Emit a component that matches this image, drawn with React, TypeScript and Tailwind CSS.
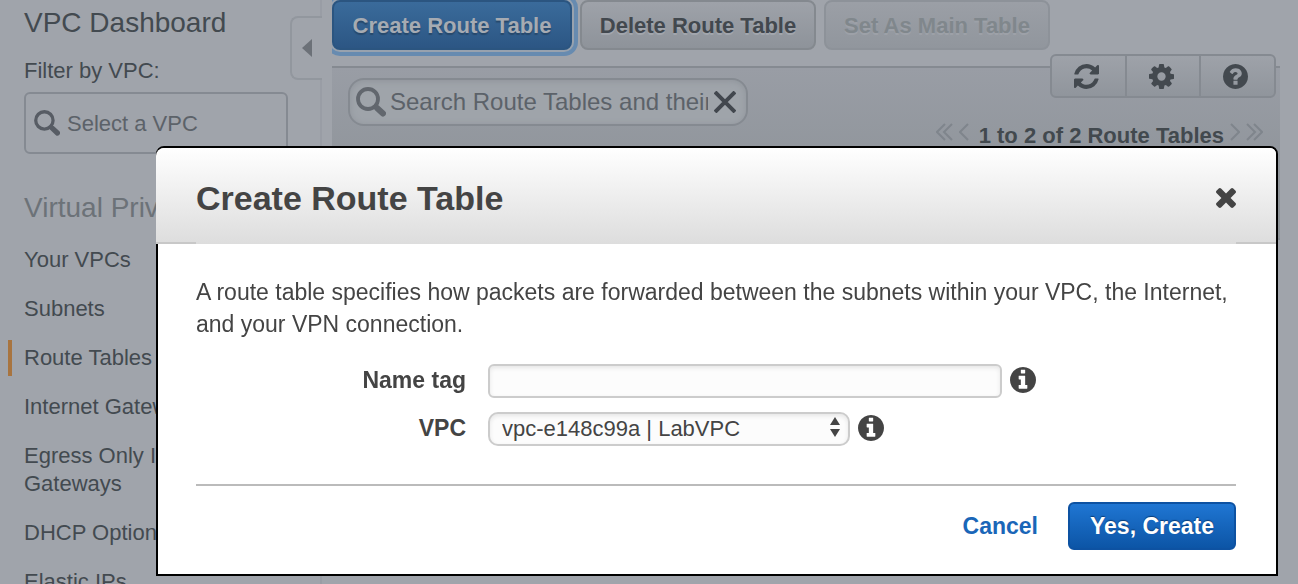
import React from "react";

const CIRCLE =
  "m640 416q0 209-103 385.5t-279.5 279.5-385.5 103-385.5-103-279.5-279.5-103-385.5 103-385.5 279.5-279.5 385.5-103 385.5 103 279.5 279.5 103 385.5z";

function InfoIcon() {
  return (
    <svg viewBox="128 128 1536 1536" className="mb-0.5 size-[26px] fill-[#444]" aria-hidden="true">
      <path
        d={
          "M1152 1376v-160q0-14-9-23t-23-9h-96v-512q0-14-9-23t-23-9h-320q-14 0-23 9t-9 23v160q0 14 9 23t23 9h96v320h-96q-14 0-23 9t-9 23v160q0 14 9 23t23 9h448q14 0 23-9t9-23zm-128-896v-160q0-14-9-23t-23-9h-192q-14 0-23 9t-9 23v160q0 14 9 23t23 9h192q14 0 23-9t9-23z" +
          CIRCLE
        }
      />
    </svg>
  );
}

function QuestionIcon() {
  return (
    <svg viewBox="128 128 1536 1536" className="size-[25px] fill-[#43494f]" aria-hidden="true">
      <path d="M1024 1376v-192q0-14-9-23t-23-9h-192q-14 0-23 9t-9 23v192q0 14 9 23t23 9h192q14 0 23-9t9-23zm256-672q0-88-55.5-163t-138.5-116-170-41q-243 0-371 213-15 24 8 42l132 100q7 6 19 6 16 0 25-12 53-68 86-92 34-24 86-24 48 0 85.5 26t37.5 59q0 38-20 61t-68 45q-63 28-115.5 86.5t-52.5 125.5v36q0 14 9 23t23 9h192q14 0 23-9t9-23q0-19 21.5-49.5t54.5-49.5q32-18 49-28.5t46-35 44.5-48 28-60.5 12.5-81zm384 192q0 209-103 385.5t-279.5 279.5-385.5 103-385.5-103-279.5-279.5-103-385.5 103-385.5 279.5-279.5 385.5-103 385.5 103 279.5 279.5 103 385.5z" />
    </svg>
  );
}

function RefreshIcon() {
  return (
    <svg viewBox="128 128 1536 1536" className="size-[25px] fill-[#43494f]" aria-hidden="true">
      <path d="M1639 1056q0 5-1 7-64 268-268 434.5t-478 166.5q-146 0-282.5-55t-243.5-157l-129 129q-19 19-45 19t-45-19-19-45v-448q0-26 19-45t45-19h448q26 0 45 19t19 45-19 45l-137 137q71 66 161 102t187 36q134 0 250-65t186-179q11-17 53-117 8-23 30-23h192q13 0 22.5 9.5t9.5 22.5zm25-800v448q0 26-19 45t-45 19h-448q-26 0-45-19t-19-45 19-45l138-138q-148-137-349-137-134 0-250 65t-186 179q-11 17-53 117-8 23-30 23h-199q-13 0-22.5-9.5t-9.5-22.5v-7q65-268 270-434.5t480-166.5q146 0 284 55.5t245 156.5l130-129q19-19 45-19t45 19 19 45z" />
    </svg>
  );
}

function GearIcon() {
  return (
    <svg viewBox="128 128 1536 1536" className="size-[25px] fill-[#43494f]" aria-hidden="true">
      <path d="M1152 896q0-106-75-181t-181-75-181 75-75 181 75 181 181 75 181-75 75-181zm512-109v222q0 12-8 23t-20 13l-185 28q-19 54-39 91 35 50 107 138 10 12 10 25t-9 23q-27 37-99 108t-94 71q-12 0-26-9l-138-108q-44 23-91 38-16 136-29 186-7 28-36 28h-222q-14 0-24.5-8.5t-11.5-21.5l-28-184q-49-16-90-37l-141 107q-10 9-25 9-14 0-25-11-126-114-165-168-7-10-7-23 0-12 8-23 15-21 51-66.5t54-70.5q-27-50-41-99l-183-27q-13-2-21-12.5t-8-23.5v-222q0-12 8-23t19-13l186-28q14-46 39-92-40-57-107-138-10-12-10-24 0-10 9-23 26-36 98.5-107.5t94.5-71.5q13 0 26 10l138 107q44-23 91-38 16-136 29-186 7-28 36-28h222q14 0 24.5 8.5t11.5 21.5l28 184q49 16 90 37l142-107q9-9 24-9 13 0 25 10 129 119 165 170 7 8 7 22 0 12-8 23-15 21-51 66.5t-54 70.5q26 50 41 98l183 28q13 2 21 12.5t8 23.5z" />
    </svg>
  );
}

function CloseIcon() {
  return (
    <svg viewBox="302 366 1188 1188" className="size-5 fill-[#444]" aria-hidden="true">
      <path d="M1490 1322q0 40-28 68l-136 136q-28 28-68 28t-68-28l-294-294-294 294q-28 28-68 28t-68-28l-136-136q-28-28-28-68t28-68l294-294-294-294q-28-28-28-68t28-68l136-136q28-28 68-28t68 28l294 294 294-294q28-28 68-28t68 28l136 136q28 28 28 68t-28 68l-294 294 294 294q28 28 28 68z" />
    </svg>
  );
}

function SearchIcon({ className }: { className: string }) {
  return (
    <svg viewBox="0 0 30 30" className={className} fill="none" aria-hidden="true">
      <circle cx="12" cy="12" r="10" stroke="currentColor" strokeWidth="3.8" />
      <path d="M18 18l3 3" stroke="currentColor" strokeWidth="4.5" />
      <path d="M21 21l6 5.500" stroke="currentColor" strokeWidth="6" strokeLinecap="round" />
    </svg>
  );
}

function Chevron({ d, width, label }: { d: string; width: number; label: string }) {
  return (
    <button type="button" aria-label={label} className="text-[#7f858c]">
      <svg width={width} height="18" viewBox={`0 0 ${width} 18`} fill="none" stroke="currentColor" strokeWidth="2">
        <path d={d} />
      </svg>
    </button>
  );
}

const links = [
  "Your VPCs",
  "Subnets",
  "Route Tables",
  "Internet Gateways",
  "Egress Only Internet Gateways",
  "DHCP Options Sets",
  "Elastic IPs",
];

function Sidebar() {
  return (
    <aside className="flex w-[322px] shrink-0 flex-col border-r-2 border-[#999da5] pl-6">
      <div className="flex items-start justify-between">
        <h1 className="mt-[5px] text-[28px] leading-9 text-[#434a50]">VPC Dashboard</h1>
        <button
          type="button"
          aria-label="Collapse sidebar"
          className="-mr-0.5 mt-4 -mb-10 flex h-16 w-8 items-center justify-center rounded-l-lg border-2 border-r-0 border-[#92979e] bg-[#a0a4ab]"
        >
          <svg viewBox="0 0 10 18" className="h-[18px] w-[10px] fill-[#6c7178]" aria-hidden="true">
            <path d="M10 0v18L0 9z" />
          </svg>
        </button>
      </div>
      <label htmlFor="vpc-filter" className="mt-4 text-[22px] leading-7 text-[#434a50]">
        Filter by VPC:
      </label>
      <div className="mr-8 mt-[7px] flex h-[62px] shrink-0 items-center gap-[7px] rounded-md border-2 border-[#858a92] pl-2">
        <SearchIcon className="size-[26px] shrink-0 text-[#575c64]" />
        <input
          id="vpc-filter"
          placeholder="Select a VPC"
          className="w-full min-w-0 bg-transparent text-[22px] text-[#5c6269] outline-none placeholder:text-[#5c6269]"
        />
      </div>
      <h2 className="mt-9 shrink-0 whitespace-nowrap text-[28px] leading-9 text-[#6c7278]">Virtual Private Cloud</h2>
      <nav className="mt-5 flex flex-col gap-[21px] text-[22px] leading-7 text-[#434a50]">
        {links.map((l) => (
          <a
            key={l}
            href="#"
            aria-current={l === "Route Tables" ? "page" : undefined}
            className={
              l === "Route Tables"
                ? "-my-1 -ml-4 border-l-4 border-[#a8743f] py-1 pl-3"
                : "pr-12"
            }
          >
            {l}
          </a>
        ))}
      </nav>
    </aside>
  );
}

const iconButton = "flex flex-1 items-center justify-center pr-1";

function Content() {
  return (
    <main className="min-w-0 flex-1 overflow-hidden pr-[18px] text-[22px]">
      <div className="flex gap-2 font-bold">
        <button
          type="button"
          className="h-[50px] w-60 rounded-lg border-2 border-[#2b5580] bg-linear-to-b from-[#3a6b9b] to-[#2c5684] text-[#a6abb2] shadow-[0_0_0_2px_#98a2ae,0_0_0_6px_#678bb0] [text-shadow:0_2px_1px_#27496c]"
        >
          Create Route Table
        </button>
        <button
          type="button"
          className="h-[50px] w-[236px] rounded-lg border-2 border-[#84898f] bg-linear-to-b from-[#9ea2a9] to-[#8e939a] text-[#42484e] [text-shadow:0_2px_0_#a2a6ad]"
        >
          Delete Route Table
        </button>
        <button
          type="button"
          disabled
          className="h-[50px] w-[226px] rounded-lg border-2 border-[#8d9299] bg-linear-to-b from-[#9b9fa6] to-[#91969d] text-[#80878c] [text-shadow:0_2px_0_#9da1a8]"
        >
          Set As Main Table
        </button>
      </div>
      <div className="mt-4 flex h-[174px] items-start justify-between border-y-2 border-[#858a91] bg-linear-to-b from-[#999da5] to-[#8a9095] pl-4 pr-1">
        <div className="mt-2.5 flex h-12 w-[400px] items-center rounded-2xl border-2 border-[#858a91] bg-[#9fa4aa] pl-1.5 pr-2.5 shadow-[inset_0_1px_6px_#8f949b]">
          <SearchIcon className="size-[30px] shrink-0 text-[#62676e]" />
          <input
            aria-label="Search Route Tables"
            placeholder="Search Route Tables and their attributes"
            className="ml-1 mr-1.5 w-full min-w-0 bg-transparent text-2xl text-[#5c6269] outline-none placeholder:text-[#5c6269]"
          />
          <button type="button" aria-label="Clear search">
            <svg viewBox="0 0 22 22" className="size-[22px] stroke-[#42474e]" strokeWidth="4" fill="none">
              <path d="M1 1l20 20M21 1L1 21" />
            </svg>
          </button>
        </div>
        <div className="-mt-3.5 flex flex-col items-end">
          <div className="flex h-11 w-[226px] divide-x-2 divide-[#858a91] rounded-md border-2 border-[#858a91] bg-linear-to-b from-[#9ea2a9] to-[#90959c]">
            <button type="button" aria-label="Refresh" className={iconButton}>
              <RefreshIcon />
            </button>
            <button type="button" aria-label="Settings" className={iconButton}>
              <GearIcon />
            </button>
            <button type="button" aria-label="Help" className={iconButton}>
              <QuestionIcon />
            </button>
          </div>
          <div className="mr-[13px] mt-3.5 flex items-center gap-1.5">
            <Chevron label="First page" width={17} d="M9 1L1 9l8 8M16 1L8 9l8 8" />
            <Chevron label="Previous page" width={10} d="M9 1L1 9l8 8" />
            <p className="pl-1 pt-2 font-bold leading-8 text-[#42494e]">1 to 2 of 2 Route Tables</p>
            <Chevron label="Next page" width={10} d="M1 1l8 8-8 8" />
            <Chevron label="Last page" width={17} d="M1 1l8 8-8 8M8 1l8 8-8 8" />
          </div>
        </div>
      </div>
    </main>
  );
}

function Dialog() {
  const label = "w-[270px] shrink-0 pb-0.5 text-right text-[23px] leading-8 font-bold";
  const field =
    "h-[34px] border-2 border-[#ccc] bg-[#fcfcfc] text-[22px] text-[#444] shadow-[inset_0_2px_4px_#e6e6e6] outline-none";
  return (
    <div className="fixed inset-0 flex items-start pl-[156px] pr-5 pt-[146px]">
      <section
        role="dialog"
        aria-modal="true"
        aria-labelledby="dialog-title"
        className="min-w-0 flex-1 rounded-t-lg border-2 border-black bg-white text-[#444]"
      >
        <header className="-ml-0.5 rounded-tl-lg rounded-tr-md bg-linear-to-b from-white to-[#ddd]">
          <div className="flex h-[94px] items-center justify-between px-10 pt-1.5">
            <h2 id="dialog-title" className="text-[34px] font-bold">
              Create Route Table
            </h2>
            <button type="button" aria-label="Close">
              <CloseIcon />
            </button>
          </div>
          <div className="flex h-0.5 justify-between">
            <span className="w-10 bg-[#c8c8c8]" />
            <span className="w-10 bg-[#c8c8c8]" />
          </div>
        </header>
        <form className="pb-6 pl-[38px] pr-10 pt-8" onSubmit={(e) => e.preventDefault()}>
          <p className="text-[23px] leading-8">
            A route table specifies how packets are forwarded between the subnets within your VPC, the Internet, and
            your VPN connection.
          </p>
          <div className="mt-6 flex items-center">
            <label htmlFor="name-tag" className={label}>
              Name tag
            </label>
            <input id="name-tag" className={`${field} ml-[22px] mr-2 w-[514px] min-w-0 rounded-md px-3`} />
            <InfoIcon />
          </div>
          <div className="mt-3.5 flex items-center">
            <label htmlFor="vpc" className={label}>
              VPC
            </label>
            <div className="relative ml-[22px] mr-2 w-[362px]">
              <select id="vpc" className={`${field} block w-full appearance-none rounded-[10px] pl-3 pr-9 leading-[30px]`}>
                <option>vpc-e148c99a | LabVPC</option>
              </select>
              <svg
                viewBox="0 0 10 20"
                className="pointer-events-none absolute right-2.5 top-[5px] h-5 w-2.5 fill-[#444]"
                aria-hidden="true"
              >
                <path d="M5 0l5 8H0zM0 12h10l-5 8z" />
              </svg>
            </div>
            <InfoIcon />
          </div>
          <footer className="mt-[38px] flex items-center justify-end gap-[30px] border-t-2 border-[#bbb] pt-4 text-[23px] font-bold">
            <button type="button" className="text-[#1a66b8]">
              Cancel
            </button>
            <button
              type="submit"
              className="h-12 w-[168px] rounded-md border-2 border-[#0d52a2] bg-linear-to-b from-[#1f76d3] to-[#0c55a6] text-white [text-shadow:0_-1px_1px_#0a3d78]"
            >
              Yes, Create
            </button>
          </footer>
        </form>
      </section>
    </div>
  );
}

export default function App() {
  return (
    <div className="flex h-screen gap-2.5 overflow-hidden bg-[#a0a4ab] font-['Helvetica_Neue','Liberation_Sans',Arial,sans-serif]">
      <Sidebar />
      <Content />
      <Dialog />
    </div>
  );
}
